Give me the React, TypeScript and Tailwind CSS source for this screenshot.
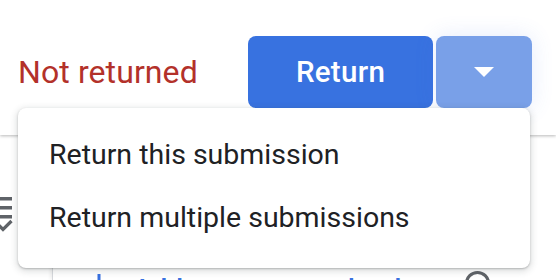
import React from 'react'

function ChecklistIcon() {
  return (
    <svg width="16" height="40" viewBox="0 0 16 40" className="block">
      <rect x="0" y="0" width="12" height="3.5" fill="#5f6368" />
      <rect x="0" y="9" width="12" height="3.5" fill="#5f6368" />
      <rect x="0" y="18" width="12" height="3.5" fill="#5f6368" />
      <path d="M-1 28.5 L3 32.5 L11.5 24" stroke="#5f6368" strokeWidth="3.2" fill="none" />
    </svg>
  )
}

function PlusIcon() {
  return (
    <svg width="24" height="24" viewBox="0 0 24 24" className="block">
      <path d="M10.5 0h3v10.5H24v3H13.5V24h-3V13.5H0v-3h10.5z" fill="#3871e0" />
    </svg>
  )
}

function SearchIcon() {
  return (
    <svg width="34" height="34" viewBox="0 0 34 34" className="block">
      <circle cx="13.5" cy="13.5" r="11" stroke="#5f6368" strokeWidth="3.2" fill="none" />
      <path d="M21.5 21.5 L31 31" stroke="#5f6368" strokeWidth="3.5" />
    </svg>
  )
}

const menuItems = ['Return this submission', 'Return multiple submissions']

export default function App() {
  return (
    <div className="relative w-[556px] h-[280px] overflow-hidden bg-white font-['Roboto',sans-serif]">
      {/* header */}
      <div className="relative z-10 h-[135px] bg-white shadow-[0_1px_3px_rgba(0,0,0,0.28)] flex items-center justify-between pl-[18px] pr-[24px] pt-[9px]">
        <p className="text-[32px] leading-none text-[#b3312a] tracking-[0.1px]">Not returned</p>
        <div className="flex gap-[3px]">
          <button className="w-[185px] h-[72px] rounded-[8px] bg-[#3872e0] text-white text-[29.5px] font-medium tracking-[0.3px] flex items-center justify-center">
            Return
          </button>
          <button className="w-[96px] h-[72px] rounded-[8px] bg-[#79a0e8] flex items-center justify-center shadow-[0_0_22px_rgba(70,110,230,0.14)]">
            <svg width="20" height="10" viewBox="0 0 20 10" className="block">
              <path d="M0 0h20L10 10z" fill="white" />
            </svg>
          </button>
        </div>
      </div>

      {/* body */}
      <div className="flex h-[145px]">
        <div className="w-[52px] pt-[62px]">
          <ChecklistIcon />
        </div>
        <div className="flex-1 border-l border-[#d6d8dc] shadow-[-2px_0_3px_rgba(0,0,0,0.06)] pt-[135px] pl-[34px] pr-[58px] flex items-start justify-between">
          <div className="flex items-start gap-[22px] pt-[4px]">
            <PlusIcon />
            <span className="text-[28px] leading-none text-[#3871e0] font-medium mt-[2px]">Add to comment bank</span>
          </div>
          <SearchIcon />
        </div>
      </div>

      {/* dropdown menu */}
      <div className="absolute left-[18px] top-[108px] z-20 w-[512px] h-[160px] rounded-[8px] bg-white pt-[16px] shadow-[0_2px_6px_2px_rgba(60,64,67,0.15),0_1px_2px_rgba(60,64,67,0.3)]">
        {menuItems.map((item) => (
          <div key={item} className="h-[63px] flex items-center pl-[31px] text-[28.5px] leading-none text-[#202124]">
            {item}
          </div>
        ))}
      </div>
    </div>
  )
}
